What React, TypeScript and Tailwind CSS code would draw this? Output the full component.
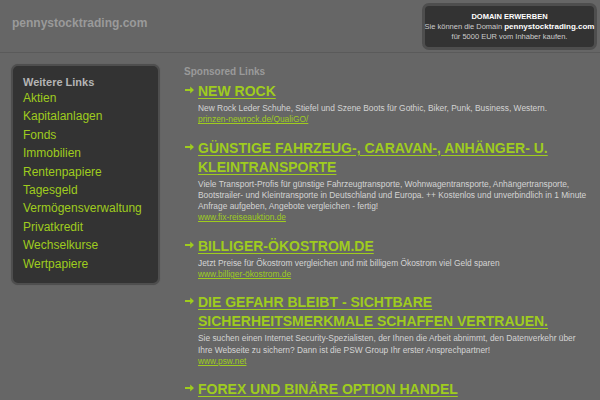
const sidebarLinks = [
  'Aktien',
  'Kapitalanlagen',
  'Fonds',
  'Immobilien',
  'Rentenpapiere',
  'Tagesgeld',
  'Vermögensverwaltung',
  'Privatkredit',
  'Wechselkurse',
  'Wertpapiere',
];

const ads = [
  {
    title: 'New Rock',
    text: 'New Rock Leder Schuhe, Stiefel und Szene Boots für Gothic, Biker, Punk, Business, Western.',
    url: 'prinzen-newrock.de/QualiGO/',
  },
  {
    title: 'Günstige Fahrzeug-, Caravan-, Anhänger- u. Kleintransporte',
    text: 'Viele Transport-Profis für günstige Fahrzeugtransporte, Wohnwagentransporte, Anhängertransporte, Bootstrailer- und Kleintransporte in Deutschland und Europa. ++ Kostenlos und unverbindlich in 1 Minute Anfrage aufgeben, Angebote vergleichen - fertig!',
    url: 'www.fix-reiseauktion.de',
  },
  {
    title: 'Billiger-Ökostrom.de',
    text: 'Jetzt Preise für Ökostrom vergleichen und mit billigem Ökostrom viel Geld sparen',
    url: 'www.billiger-ökostrom.de',
  },
  {
    title: 'Die Gefahr bleibt - sichtbare Sicherheitsmerkmale schaffen Vertrauen.',
    text: 'Sie suchen einen Internet Security-Spezialisten, der Ihnen die Arbeit abnimmt, den Datenverkehr über Ihre Webseite zu sichern? Dann ist die PSW Group Ihr erster Ansprechpartner!',
    url: 'www.psw.net',
  },
  {
    title: 'Forex und Binäre Option Handel',
    text: '',
    url: '',
  },
];

function Arrow() {
  return (
    <svg width="9" height="8" viewBox="0 0 9 8" className="mt-[4px]">
      <path d="M0 3.1h5.2V0.6L9 4 5.2 7.4V4.9H0z" fill="#9fcc1e" />
    </svg>
  );
}

export default function App() {
  return (
    <div
      className="w-[600px] h-[400px] overflow-hidden bg-[#666666]"
      style={{ fontFamily: '"Liberation Sans", Arial, sans-serif' }}
    >
      {/* Header */}
      <header className="h-[53px] flex items-start justify-between border-b border-[#5a5a5a] pl-[12px] pr-[3px]">
        <div className="pt-[15px] text-[12px] font-bold text-[#9a9a9a] leading-[16px]">
          pennystocktrading.com
        </div>
        <div className="mt-[3px] w-[175px] h-[47px] rounded-[7px] border-[3px] border-[#4e4e4e] bg-[#333333] flex flex-col items-center justify-center text-center whitespace-nowrap text-[7.5px] leading-[10px] text-[#cccccc]">
          <div className="font-bold text-white">DOMAIN ERWERBEN</div>
          <div>
            Sie können die Domain <span className="font-bold text-white text-[8px]">pennystocktrading.com</span>
          </div>
          <div>für 5000 EUR vom Inhaber kaufen.</div>
        </div>
      </header>

      <div className="flex items-start">
        {/* Sidebar */}
        <aside className="ml-[11px] mt-[11px] w-[149px] shrink-0 rounded-[7px] border-[2px] border-[#4e4e4e] bg-[#333333] pl-[10px] pt-[10px] pb-[10px] shadow-[0_0_1px_#555]">
          <div className="text-[11px] font-bold leading-[13px] text-[#b5b5b5]">Weitere Links</div>
          <ul>
            {sidebarLinks.map((l) => (
              <li key={l} className="text-[12px] leading-[18.4px] text-[#9fcc1e]">
                {l}
              </li>
            ))}
          </ul>
        </aside>

        {/* Sponsored */}
        <main className="ml-[24px] pt-[13px] pr-[8px] flex-1">
          <div className="text-[10px] font-bold leading-[12px] text-[#9a9a9a]">Sponsored Links</div>
          <div className="mt-[4px] flex flex-col gap-[13px]">
            {ads.map((a) => (
              <div key={a.title} className="flex">
                <div className="w-[14px] shrink-0 pl-[1px]">
                  <Arrow />
                </div>
                <div className="flex-1">
                  <div className="text-[14px] font-bold uppercase leading-[19px] text-[#9fcc1e] underline underline-offset-[2px]">
                    {a.title}
                  </div>
                  {a.text && (
                    <div className="mt-[2px] text-[8.4px] leading-[11.3px] text-[#d4d4d4]">{a.text}</div>
                  )}
                  {a.url && (
                    <div className="text-[8.4px] leading-[11.3px] text-[#9fcc1e] underline">{a.url}</div>
                  )}
                </div>
              </div>
            ))}
          </div>
        </main>
      </div>
    </div>
  );
}
